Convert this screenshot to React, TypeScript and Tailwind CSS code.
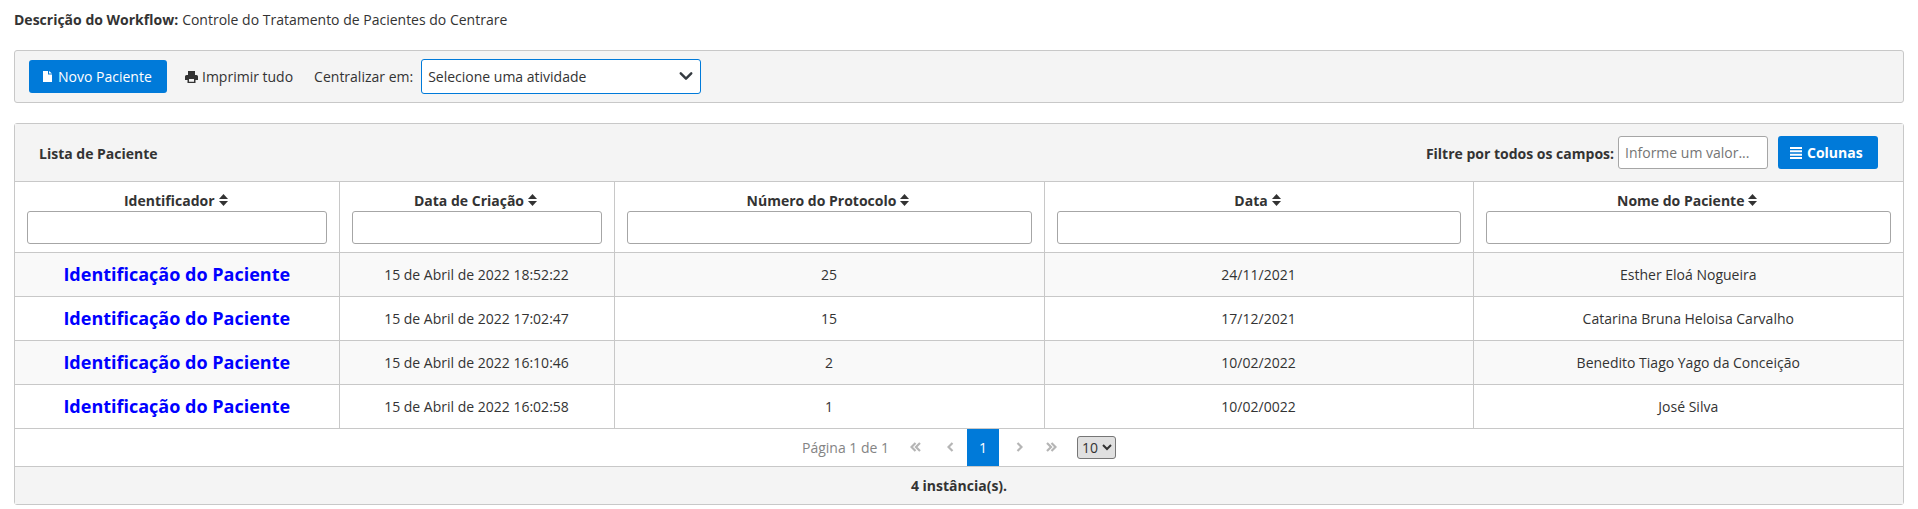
import React from "react";

const columns = [
  { label: "Identificador", cls: "w-[324px]" },
  { label: "Data de Criação", cls: "w-[275px]" },
  { label: "Número do Protocolo", cls: "w-[430px]" },
  { label: "Data", cls: "w-[429px]" },
  { label: "Nome do Paciente", cls: "" },
];

const rows = [
  ["15 de Abril de 2022 18:52:22", "25", "24/11/2021", "Esther Eloá Nogueira"],
  ["15 de Abril de 2022 17:02:47", "15", "17/12/2021", "Catarina Bruna Heloisa Carvalho"],
  ["15 de Abril de 2022 16:10:46", "2", "10/02/2022", "Benedito Tiago Yago da Conceição"],
  ["15 de Abril de 2022 16:02:58", "1", "10/02/0022", "José Silva"],
];

function SortIcon() {
  return (
    <svg className="ml-[4px] h-[12px] w-[9px]" viewBox="0 0 9 12" fill="currentColor">
      <path d="M4.5 0L9 5H0z" />
      <path d="M0 7h9l-4.5 5z" />
    </svg>
  );
}

function FileIcon() {
  return (
    <svg className="mr-[6px] h-[11px] w-[9px]" viewBox="0 0 9 11" fill="currentColor">
      <path d="M0 0h5v3.5h4V11H0z" />
      <path d="M6 0l3 2.6H6z" />
    </svg>
  );
}

function PrintIcon() {
  return (
    <svg className="mr-[4px] h-[12px] w-[13px]" viewBox="0 0 13 12" fill="currentColor">
      <path d="M3 0h7v4H3z" />
      <path fillRule="evenodd" d="M1.5 4h10A1.5 1.5 0 0 1 13 5.5V9h-2.5v3h-8V9H0V5.5A1.5 1.5 0 0 1 1.5 4zM4 8v2.8h5V8z" />
    </svg>
  );
}

function LinesIcon() {
  return (
    <svg className="mr-[5px] h-[12px] w-[12px]" viewBox="0 0 12 12" fill="currentColor">
      <path d="M0 0h12v2H0zM0 3.3h12v2H0zM0 6.7h12v2H0zM0 10h12v2H0z" />
    </svg>
  );
}

function Chevron({ d, w }: { d: string; w: number }) {
  return (
    <svg width={w} height={10} viewBox={`0 0 ${w} 10`} fill="none" stroke="#b5b5b5" strokeWidth="2.2">
      <path d={d} />
    </svg>
  );
}

export default function App() {
  return (
    <div className="h-[509px] w-[1918px] overflow-hidden bg-white px-[14px] pt-[9px] font-['Open_Sans','Noto_Sans',sans-serif] text-[14px] text-[#333333]">
      <div className="flex h-[21px] items-center">
        <span className="font-bold">Descrição do Workflow:</span>
        <span className="ml-[4px]">Controle do Tratamento de Pacientes do Centrare</span>
      </div>

      <div className="mt-[20px] flex h-[53px] items-center rounded-[3px] border border-[#c8c8c8] bg-[#f4f4f4] pl-[14px]">
        <button className="flex h-[33px] w-[138px] items-center rounded-[3px] bg-[#007ad9] pl-[14px] text-white">
          <FileIcon />
          Novo Paciente
        </button>
        <span className="ml-[18px] flex items-center">
          <PrintIcon />
          Imprimir tudo
        </span>
        <span className="ml-[21px]">Centralizar em:</span>
        <div className="relative ml-[8px]">
          <select className="block h-[35px] w-[280px] appearance-none rounded-[3px] border border-[#007ad9] bg-white pl-[6px] text-[14px] text-[#333333] outline-none">
            <option>Selecione uma atividade</option>
          </select>
          <svg
            className="pointer-events-none absolute right-[8px] top-[10px] h-[14px] w-[14px]"
            viewBox="0 0 16 16"
            fill="none"
            stroke="#343a40"
            strokeWidth="2.8"
            strokeLinecap="round"
            strokeLinejoin="round"
          >
            <path d="M2 5l6 6 6-6" />
          </svg>
        </div>
      </div>

      <div className="mt-[20px] w-[1890px] rounded-[3px] border border-[#c8c8c8]">
        <div className="flex h-[58px] items-center justify-between border-b border-[#c8c8c8] bg-[#f4f4f4] pl-[24px] pr-[25px]">
          <span className="mt-[2px] font-bold">Lista de Paciente</span>
          <div className="flex items-center">
            <span className="mt-[2px] font-bold">Filtre por todos os campos:</span>
            <input
              className="ml-[4px] h-[33px] w-[150px] rounded-[3px] border border-[#a6a6a6] bg-white px-[6px] text-[14px] outline-none placeholder:text-[#757575]"
              placeholder="Informe um valor..."
            />
            <button className="ml-[10px] flex h-[33px] w-[100px] items-center rounded-[3px] bg-[#007ad9] pl-[12px] font-bold text-white">
              <LinesIcon />
              Colunas
            </button>
          </div>
        </div>

        <table className="w-full table-fixed border-collapse">
          <thead>
            <tr className="h-[70px] bg-white">
              {columns.map((c, i) => (
                <th
                  key={c.label}
                  className={`${c.cls} border-b border-[#c8c8c8] px-[12px] pb-[7px] pt-[8px] align-top font-bold ${i > 0 ? "border-l" : ""}`}
                >
                  <div className="flex h-[20px] items-center justify-center pr-[2px]">
                    {c.label}
                    <SortIcon />
                  </div>
                  <input className="mt-[1px] block h-[33px] w-full rounded-[3px] border border-[#a6a6a6] bg-white" />
                </th>
              ))}
            </tr>
          </thead>
          <tbody>
            {rows.map((r, i) => (
              <tr key={r[0]} className={`h-[44px] ${i % 2 === 0 ? "bg-[#f9f9f9]" : "bg-white"}`}>
                <td className="border-b border-[#c8c8c8] text-center text-[18px] font-bold text-[#0000ff]">
                  Identificação do Paciente
                </td>
                {r.map((v) => (
                  <td key={v} className="border-b border-l border-[#c8c8c8] text-center">
                    {v}
                  </td>
                ))}
              </tr>
            ))}
          </tbody>
        </table>

        <div className="flex h-[38px] items-center justify-center border-b border-[#c8c8c8] bg-white">
          <span className="mr-[10px] text-[#848484]">Página 1 de 1</span>
          <span className="flex h-[37px] w-[32px] items-center justify-center">
            <Chevron w={11} d="M5.5 1L1.5 5l4 4M10 1L6 5l4 4" />
          </span>
          <span className="ml-[3px] mr-[1px] flex h-[37px] w-[32px] items-center justify-center">
            <Chevron w={7} d="M5.5 1L1.5 5l4 4" />
          </span>
          <span className="flex h-[37px] w-[32px] items-center justify-center bg-[#007ad9] text-white">1</span>
          <span className="ml-[4px] flex h-[37px] w-[32px] items-center justify-center">
            <Chevron w={7} d="M1.5 1l4 4-4 4" />
          </span>
          <span className="flex h-[37px] w-[32px] items-center justify-center">
            <Chevron w={11} d="M1 1l4 4-4 4M5.5 1l4 4-4 4" />
          </span>
          <select className="ml-[10px] h-[23px] w-[39px] rounded-[3px] border border-[#767676] bg-[#e0e0e0] text-[14px] text-[#333333]">
            <option>10</option>
          </select>
        </div>

        <div className="flex h-[37px] items-center justify-center bg-[#f4f4f4] font-bold">4 instância(s).</div>
      </div>
    </div>
  );
}
